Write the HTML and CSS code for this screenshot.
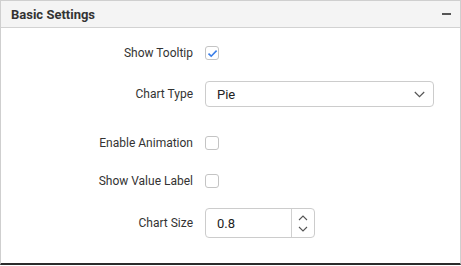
FILE: index.html
```html
<!DOCTYPE html>
<html>
<head>
    <title>Basic Settings</title>
    <link rel="stylesheet" href="styles.css">
</head>
<body>
    <div class="panel">
        <div class="panel-header">
            <span class="panel-title">Basic Settings</span>
            <span class="collapse"></span>
        </div>
        <div class="panel-body">
            <div class="row row-1">
                <label class="label">Show Tooltip</label>
                <span class="check checked">
                    <svg width="11" height="9" viewBox="0 0 11 9"><path d="M1.5 4.6 L4.2 7.2 L9.6 1.6" fill="none" stroke="#3a7ee8" stroke-width="1.6"/></svg>
                </span>
            </div>
            <div class="row row-2">
                <label class="label">Chart Type</label>
                <div class="select">
                    <span class="value">Pie</span>
                    <svg class="chevron" width="11" height="7" viewBox="0 0 11 7"><path d="M0.8 1 L5.5 5.6 L10.2 1" fill="none" stroke="#555" stroke-width="1.2"/></svg>
                </div>
            </div>
            <div class="row row-3">
                <label class="label">Enable Animation</label>
                <span class="check"></span>
            </div>
            <div class="row row-4">
                <label class="label">Show Value Label</label>
                <span class="check"></span>
            </div>
            <div class="row row-5">
                <label class="label">Chart Size</label>
                <div class="numeric">
                    <span class="value">0.8</span>
                    <div class="spin">
                        <svg width="10" height="6" viewBox="0 0 10 6"><path d="M1 5 L5 1 L9 5" fill="none" stroke="#555" stroke-width="1.1"/></svg>
                        <svg width="10" height="6" viewBox="0 0 10 6"><path d="M1 1 L5 5 L9 1" fill="none" stroke="#555" stroke-width="1.1"/></svg>
                    </div>
                </div>
            </div>
        </div>
    </div>
</body>
</html>
```

FILE: styles.css
```css
body {
    margin: 0;
    font-family: Roboto, "Liberation Sans", sans-serif;
    background: #ffffff;
}
.panel {
    height: 265px;
    box-sizing: border-box;
    border: 1px solid #cfcfcf;
    border-bottom: 2px solid #2b2b2b;
    background: #ffffff;
}
.panel-header {
    height: 26px;
    display: flex;
    align-items: center;
    justify-content: space-between;
    padding: 0 10px 0 10px;
    background: #f4f4f4;
    border-bottom: 1px solid #d2d2d2;
}
.panel-title {
    font-size: 13px;
    font-weight: bold;
    color: #333333;
}
.collapse {
    width: 9px;
    height: 2px;
    background: #555555;
    margin-right: -1px;
}
.panel-body {
    display: flex;
    flex-direction: column;
}
.row {
    display: flex;
    align-items: center;
    height: 26px;
}
.row-1 { margin-top: 12px; }
.row-2 { margin-top: 15px; }
.row-3 { margin-top: 23px; }
.row-4 { margin-top: 12px; }
.row-5 { margin-top: 14px; height: 30px; }
.label {
    width: 192px;
    text-align: right;
    padding-right: 12px;
    font-size: 12px;
    color: #333333;
}
.check {
    width: 12px;
    height: 12px;
    border: 1px solid #c4c4c4;
    border-radius: 3px;
    display: flex;
    align-items: center;
    justify-content: center;
}
.select {
    width: 229px;
    height: 26px;
    box-sizing: border-box;
    border: 1px solid #cccccc;
    border-radius: 4px;
    display: flex;
    align-items: center;
    justify-content: space-between;
    padding: 0 8px 0 11px;
}
.value {
    font-size: 13px;
    color: #222222;
}
.numeric {
    width: 110px;
    height: 30px;
    box-sizing: border-box;
    border: 1px solid #cccccc;
    border-radius: 4px;
    display: flex;
    align-items: center;
    justify-content: space-between;
    padding-left: 11px;
}
.spin {
    width: 22px;
    height: 100%;
    border-left: 1px solid #d0d0d0;
    display: flex;
    flex-direction: column;
    align-items: center;
    justify-content: center;
    gap: 5px;
}
```
